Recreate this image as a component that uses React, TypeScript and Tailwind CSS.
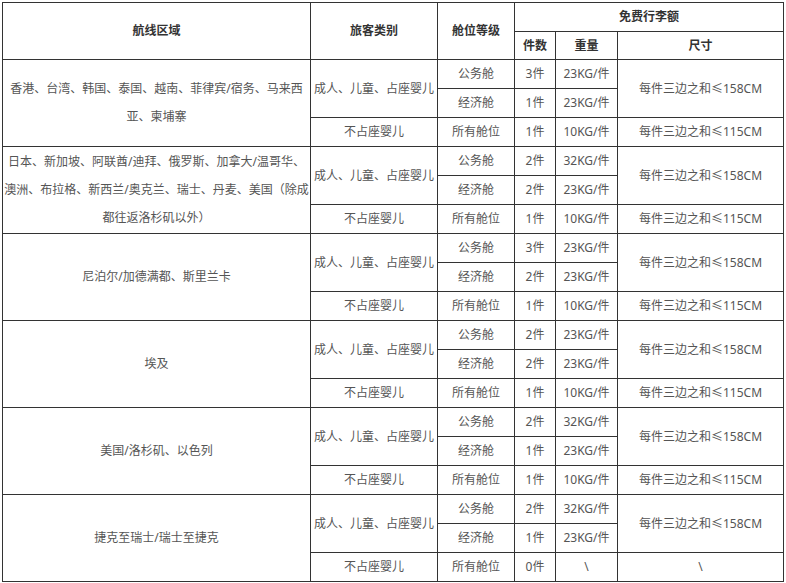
// 免费行李额 table — baggage allowance by route region
import React from 'react';

interface Group {
  region: string[];
  business: [string, string];
  economy: [string, string];
  infant: [string, string, string];
}

const groups: Group[] = [
  {
    region: ['香港、台湾、韩国、泰国、越南、菲律宾/宿务、马来西', '亚、柬埔寨'],
    business: ['3件', '23KG/件'],
    economy: ['1件', '23KG/件'],
    infant: ['1件', '10KG/件', '每件三边之和≤115CM'],
  },
  {
    region: [
      '日本、新加坡、阿联酋/迪拜、俄罗斯、加拿大/温哥华、',
      '澳洲、布拉格、新西兰/奥克兰、瑞士、丹麦、美国（除成',
      '都往返洛杉矶以外）',
    ],
    business: ['2件', '32KG/件'],
    economy: ['2件', '23KG/件'],
    infant: ['1件', '10KG/件', '每件三边之和≤115CM'],
  },
  {
    region: ['尼泊尔/加德满都、斯里兰卡'],
    business: ['3件', '23KG/件'],
    economy: ['2件', '23KG/件'],
    infant: ['1件', '10KG/件', '每件三边之和≤115CM'],
  },
  {
    region: ['埃及'],
    business: ['2件', '23KG/件'],
    economy: ['2件', '23KG/件'],
    infant: ['1件', '10KG/件', '每件三边之和≤115CM'],
  },
  {
    region: ['美国/洛杉矶、以色列'],
    business: ['2件', '32KG/件'],
    economy: ['1件', '23KG/件'],
    infant: ['1件', '10KG/件', '每件三边之和≤115CM'],
  },
  {
    region: ['捷克至瑞士/瑞士至捷克'],
    business: ['2件', '32KG/件'],
    economy: ['1件', '23KG/件'],
    infant: ['0件', '\\', '\\'],
  },
];

const cell =
  'flex items-center justify-center text-center border-r border-b border-[#333] whitespace-nowrap';

export default function App() {
  return (
    <div className="bg-white w-[786px] h-[583px] pt-[2px] pl-[2px] font-['Noto_Sans','Noto_Sans_CJK_SC',sans-serif] text-[12px] text-[#555]">
      <div className="grid w-fit grid-cols-[308px_127px_77px_41px_62px_166px] grid-rows-[29px_28px_repeat(18,29px)] border-l border-t border-[#333]">
        {/* Header */}
        <div className={`${cell} row-span-2 font-bold text-[#333]`}>航线区域</div>
        <div className={`${cell} row-span-2 font-bold text-[#333]`}>旅客类别</div>
        <div className={`${cell} row-span-2 font-bold text-[#333]`}>舱位等级</div>
        <div className={`${cell} col-span-3 font-bold text-[#333]`}>免费行李额</div>
        <div className={`${cell} font-bold text-[#333]`}>件数</div>
        <div className={`${cell} font-bold text-[#333]`}>重量</div>
        <div className={`${cell} font-bold text-[#333]`}>尺寸</div>

        {groups.map((g, i) => (
          <React.Fragment key={i}>
            <div className={`${cell} row-span-3 flex-col leading-[28px]`}>
              {g.region.map((line, j) => (
                <span key={j}>{line}</span>
              ))}
            </div>
            <div className={`${cell} row-span-2`}>成人、儿童、占座婴儿</div>
            <div className={cell}>公务舱</div>
            <div className={cell}>{g.business[0]}</div>
            <div className={cell}>{g.business[1]}</div>
            <div className={`${cell} row-span-2`}>每件三边之和≤158CM</div>

            <div className={cell}>经济舱</div>
            <div className={cell}>{g.economy[0]}</div>
            <div className={cell}>{g.economy[1]}</div>

            <div className={cell}>不占座婴儿</div>
            <div className={cell}>所有舱位</div>
            <div className={cell}>{g.infant[0]}</div>
            <div className={cell}>{g.infant[1]}</div>
            <div className={cell}>{g.infant[2]}</div>
          </React.Fragment>
        ))}
      </div>
    </div>
  );
}
